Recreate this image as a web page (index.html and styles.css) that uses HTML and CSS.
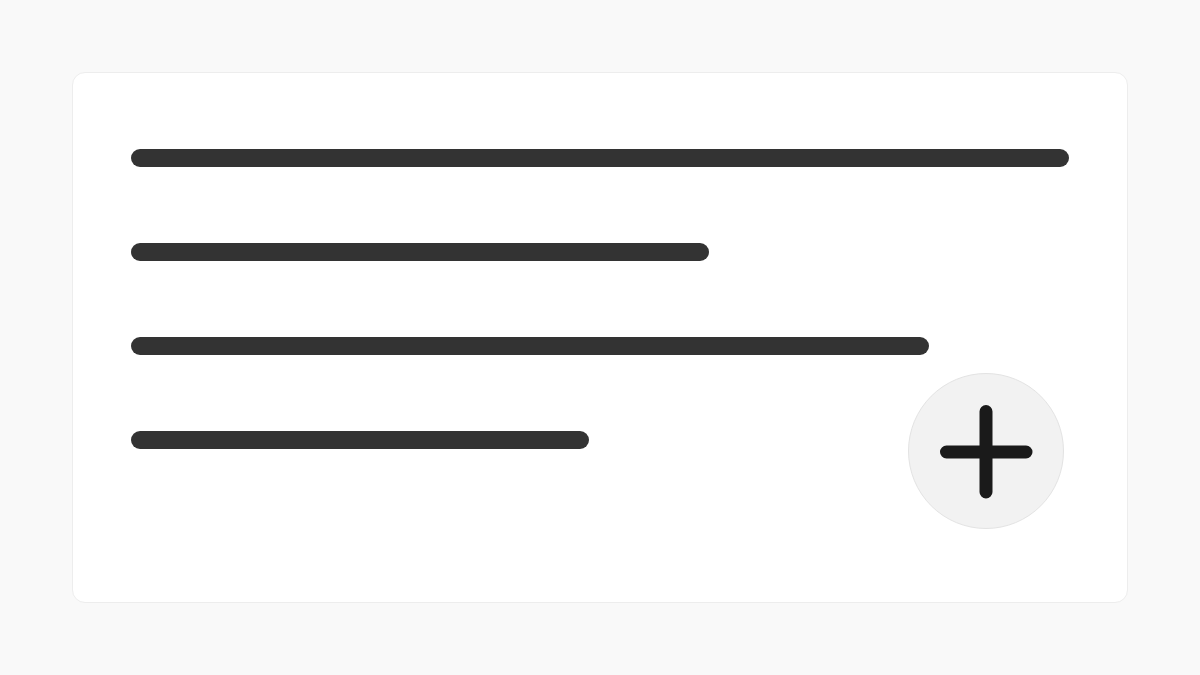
FILE: index.html
```html
<!DOCTYPE html>
<html lang="en">
<head>
    <meta charset="UTF-8">
    <meta name="viewport" content="width=device-width, initial-scale=1.0">
    <title>Notes</title>
    <link rel="stylesheet" href="styles.css">
</head>
<body>
    <main class="card">
        <div class="lines">
            <div class="line line-full"></div>
            <div class="line line-short"></div>
            <div class="line line-long"></div>
            <div class="line line-half"></div>
        </div>
        <button class="add-button" aria-label="Add">
            <svg width="154" height="154" viewBox="0 0 154 154">
                <path d="M77 37.5 V118 M37.5 78 H117" stroke="#1a1a1a" stroke-width="13" stroke-linecap="round" fill="none"/>
            </svg>
        </button>
    </main>
</body>
</html>
```

FILE: styles.css
```css
body {
    margin: 0;
    padding: 0;
    height: 100vh;
    display: flex;
    align-items: center;
    justify-content: center;
    background-color: #f9f9f9;
    font-family: "Liberation Sans", Arial, sans-serif;
}
.card {
    position: relative;
    box-sizing: border-box;
    width: 1056px;
    height: 531px;
    background-color: #ffffff;
    border: 1px solid #ededed;
    border-radius: 13px;
    padding: 76px 58px 0 58px;
}
.lines {
    display: flex;
    flex-direction: column;
    gap: 76px;
}
.line {
    height: 18px;
    border-radius: 9px;
    background-color: #333333;
}
.line-full {
    width: 938px;
}
.line-short {
    width: 578px;
}
.line-long {
    width: 798px;
}
.line-half {
    width: 458px;
}
.add-button {
    position: absolute;
    right: 63px;
    bottom: 73px;
    width: 156px;
    height: 156px;
    padding: 0;
    border: 1px solid #e3e3e3;
    border-radius: 50%;
    background-color: #f2f2f2;
    display: flex;
    align-items: center;
    justify-content: center;
    cursor: pointer;
}
```
